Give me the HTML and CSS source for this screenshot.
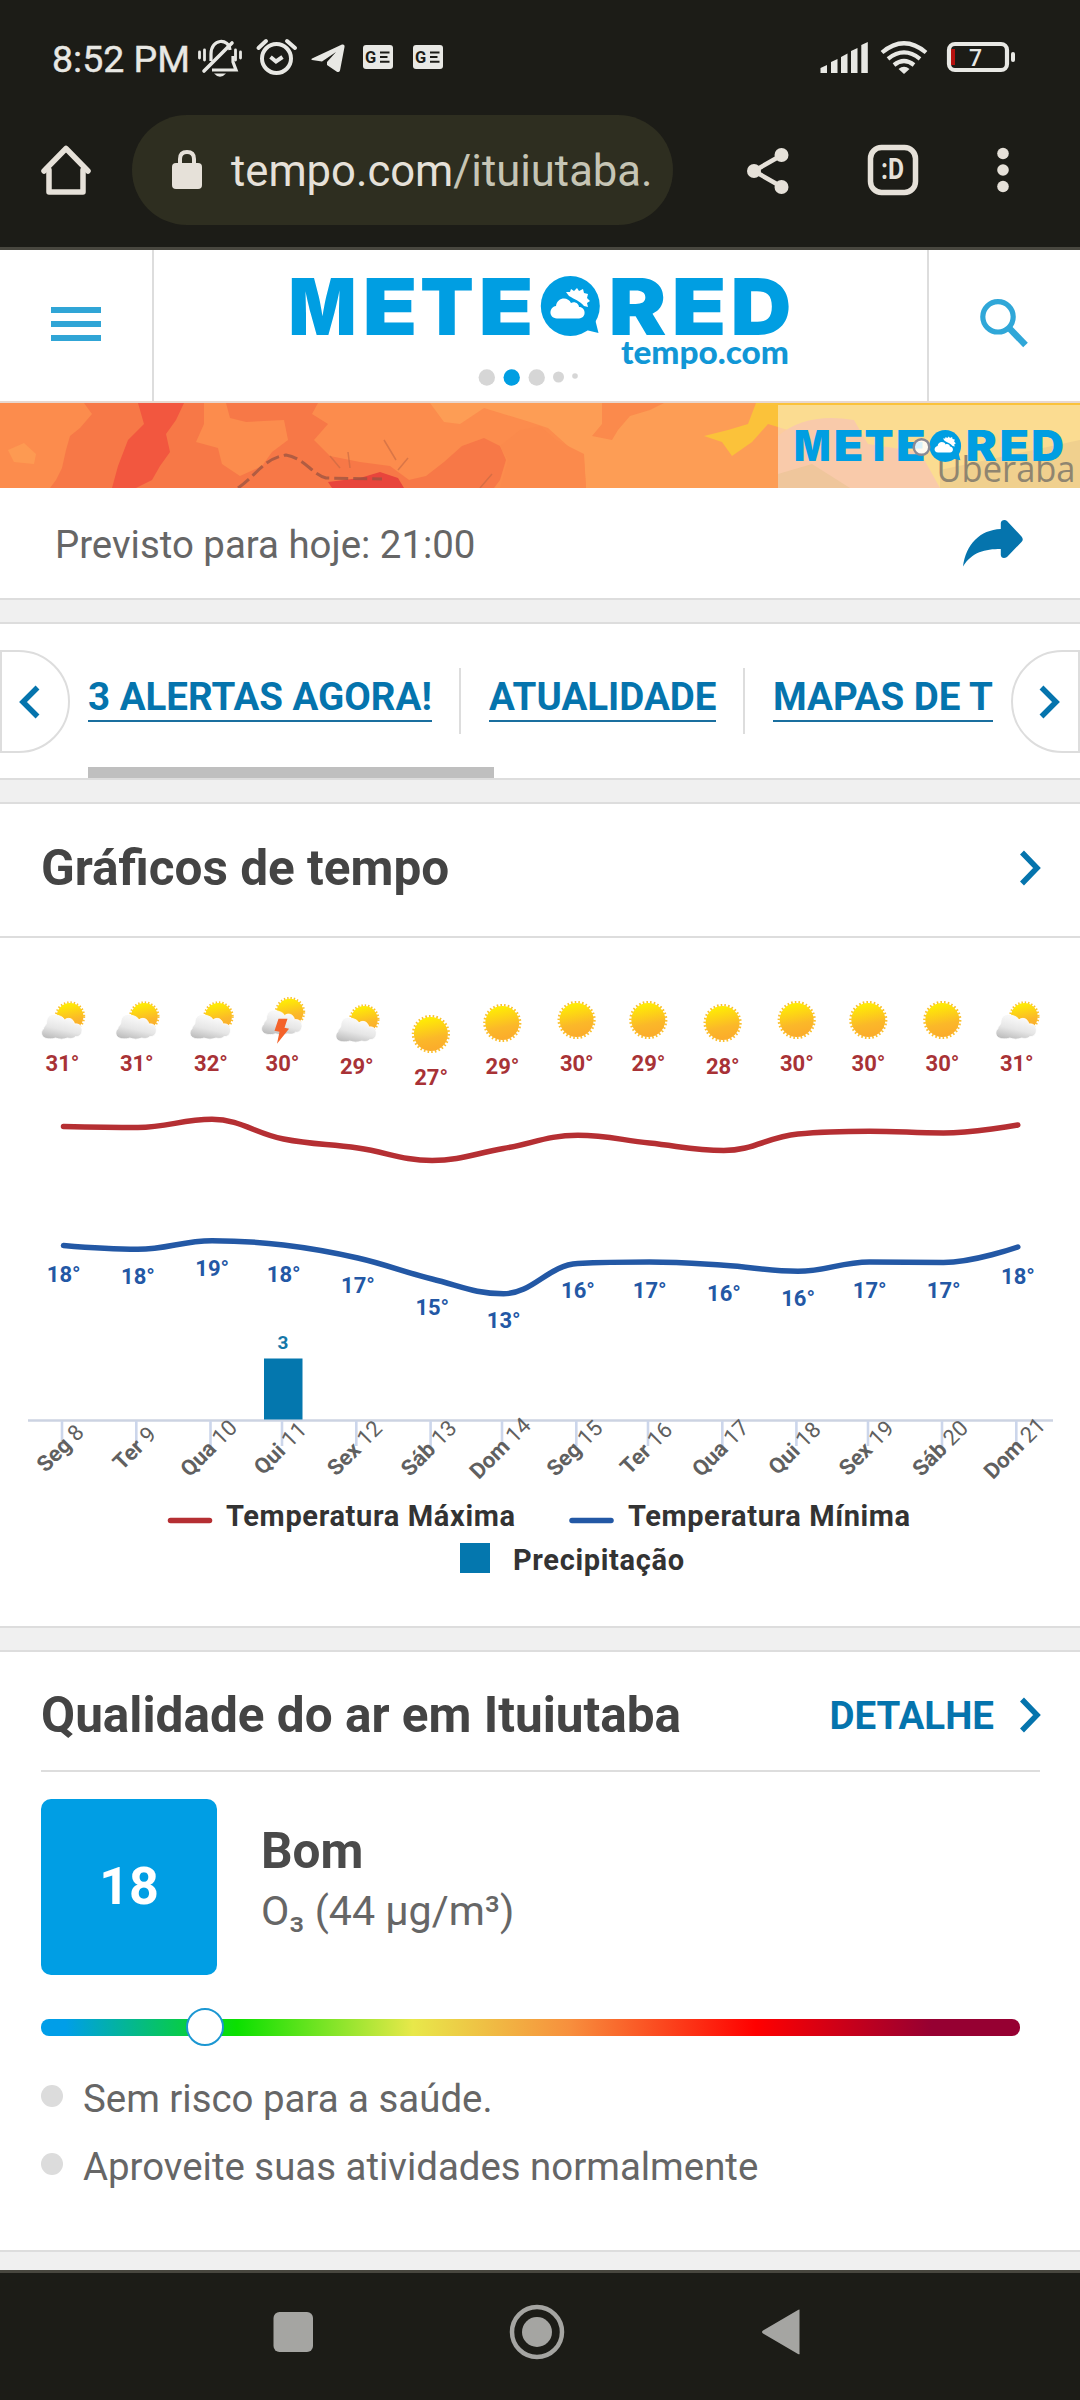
FILE: index.html
```html
<!DOCTYPE html>
<html lang="pt-BR">
<head>
    <meta charset="utf-8">
    <meta name="viewport" content="width=device-width, initial-scale=1">
    <title>Tempo em Ituiutaba</title>
    <link rel="stylesheet" href="styles.css">
</head>
<body>
    <!-- Shared symbols -->
    <svg class="symbols" width="0" height="0">
        <defs>
            <linearGradient id="sunFill" x1="0" y1="0" x2="0.2" y2="1">
                <stop offset="0.05" stop-color="#fff200"/>
                <stop offset="0.7" stop-color="#fbb829"/>
                <stop offset="1" stop-color="#fbad2b"/>
            </linearGradient>
            <linearGradient id="cloudFill" x1="0.6" y1="0.2" x2="0.3" y2="1">
                <stop offset="0" stop-color="#f7f7f7"/>
                <stop offset="0.5" stop-color="#e6e6e6"/>
                <stop offset="1" stop-color="#bdbdbd"/>
            </linearGradient>
            <g id="sun">
                <circle r="17.800" fill="none" stroke="#fbc02d" stroke-width="2.6" stroke-dasharray="1.6 2.1"/>
                <circle r="17" fill="url(#sunFill)"/>
            </g>
            <g id="cloudy">
                <circle cx="28.5" cy="15.5" r="14" fill="none" stroke="#fbc02d" stroke-width="2.4" stroke-dasharray="1.4 1.9"/>
                <circle cx="28.5" cy="15.5" r="13.4" fill="url(#sunFill)"/>
                <path fill="url(#cloudFill)" stroke="#fff" stroke-width="0.8" d="M2 28C2 25 5 24 5 22C5 15 10 12 15 14C19 15 22 16 23 19C26 16 32 17 33 23C38 22 41 26 40.500 30C40 34 37 36 34 35.500C32 38 28 37.500 26 37C22 38.500 18 38.500 14 37C10 38.500 4 38 2 36C-1 34 0 29 2 28Z"/>
            </g>
            <g id="storm">
                <use href="#cloudy"/>
                <path fill="#f4622a" d="M17 22H26L23 31L27.500 32L15.500 47L18 35L13 34Z"/>
            </g>
            <g id="wordmark">
                <g class="wordmark-text">
                    <text x="288.500" y="335" textLength="68" lengthAdjust="spacingAndGlyphs">M</text>
                    <text x="362.500" y="335" textLength="55" lengthAdjust="spacingAndGlyphs">E</text>
                    <text x="420" y="335" textLength="54" lengthAdjust="spacingAndGlyphs">T</text>
                    <text x="478.500" y="335" textLength="55" lengthAdjust="spacingAndGlyphs">E</text>
                    <text x="608.500" y="335" textLength="58" lengthAdjust="spacingAndGlyphs">R</text>
                    <text x="671.500" y="335" textLength="55" lengthAdjust="spacingAndGlyphs">E</text>
                    <text x="730.500" y="335" textLength="61" lengthAdjust="spacingAndGlyphs">D</text>
                </g>
                <ellipse cx="570.300" cy="306" rx="29.500" ry="30"/>
                <path d="M586 330L598.500 333L595 319Z"/>
                <path fill="#fff" d="M566 292L570 292L571 289L574 291L577 288L579 291L583 289L584 293L588 294L587 298L590 301L587 303L588 307L584 306C580 301 574 299 569 296Z"/>
                <path fill="#fff" d="M557 318.500C548 318 549 307 556 306C557 297 568 296 571 303C575 301 579 304 579 307C586 307 587 318 579 318.500Z"/>
            </g>
        </defs>
    </svg>

    <div class="status-bar">
        <span class="clock">8:52 PM</span>
        <svg width="58" height="44" viewBox="192 37 58 44" fill="none" stroke="#e8e8e4" stroke-width="3.2">
            <path d="M211 61V54C211 38 229 38 230 50M233 56V62L236 70H212"/>
            <path d="M204 71L232 43" stroke-width="3.600" stroke-linecap="round"/>
            <path d="M199.500 52V58M204.500 50V60M235.500 50V60M240.500 52V58" stroke-linecap="round" stroke-width="2.800"/>
            <path d="M214 73.500H226Q220 80 214 73.500Z" fill="#e8e8e4" stroke="none"/>
        </svg>
        <svg width="54" height="44" viewBox="250 37 54 44" fill="none" stroke="#e8e8e4" stroke-width="4">
            <circle cx="276.500" cy="58.500" r="14.500"/>
            <path d="M270.500 57L276 61.500L282.500 57"/>
            <path d="M258.500 48L266 41M295 48L287 41" stroke-linecap="round"/>
        </svg>
        <svg width="50" height="44" viewBox="304 37 50 44" fill="#e8e8e4">
            <path d="M312 58.500L342 44.500Q345 44 344.500 47L340 70.500Q339 73 336.500 71.500L327 65V62L336 52L322 61.500L312 60Q310.500 59 312 58.500Z"/>
        </svg>
        <svg width="50" height="44" viewBox="354 37 50 44">
            <rect x="363" y="45" width="30" height="24" rx="3" fill="#e8e8e4"/>
            <text class="news-letter" x="365" y="63">G</text>
            <path d="M380 52.500H389.500M380 57H387.500M380 61.800H389.500" stroke="#1c1c17" stroke-width="2"/>
        </svg>
        <svg width="50" height="44" viewBox="354 37 50 44">
            <rect x="363" y="45" width="30" height="24" rx="3" fill="#e8e8e4"/>
            <text class="news-letter" x="365" y="63">G</text>
            <path d="M380 52.500H389.500M380 57H387.500M380 61.800H389.500" stroke="#1c1c17" stroke-width="2"/>
        </svg>
        <svg class="status-right" width="204" height="44" viewBox="816 37 204 44">
            <g fill="#e8e8e4">
                <path d="M820.500 73V68L827 65V73ZM831 73V62L837.500 59V73ZM841 73V57L847.500 53.500V73ZM851 73V51L857.500 48V73ZM861.300 73V45L867.800 42V73Z"/>
                <path d="M898.500 69Q904 64.500 909.500 69L904 74Z"/>
                <rect x="1011" y="52" width="4" height="10" rx="2"/>
            </g>
            <g fill="none" stroke="#e8e8e4" stroke-width="4.200">
                <path d="M882 52.500Q904 34 926 52.500"/>
                <path d="M888 58.800Q904 46 920 58.800"/>
                <path d="M894 65Q904 57 914 65"/>
                <rect x="949" y="44" width="58" height="26" rx="6"/>
            </g>
            <path d="M951 49H955V65H951Z" fill="#b5120f"/>
            <text class="battery-level" x="969" y="66">7</text>
        </svg>
    </div>

    <div class="browser-bar">
        <svg width="132" height="110" viewBox="0 115 132 110" fill="none" stroke="#e6e1d9" stroke-width="5.500" stroke-linejoin="round" stroke-linecap="round">
            <path d="M49 170V192H83V170"/>
            <path d="M44 171L66 148.500L88 171" />
        </svg>
        <div class="url">
            <svg width="30" height="40" viewBox="172 150 30 40">
                <path d="M180 166V159Q180 152 187 152Q194 152 194 159V166" fill="none" stroke="#e6e1d9" stroke-width="4"/>
                <rect x="172" y="163" width="30" height="26" rx="4" fill="#e6e1d9"/>
            </svg>
            <span class="address">tempo.com<span class="path">/ituiutaba.</span></span>
        </div>
        <svg class="browser-actions" width="407" height="110" viewBox="673 115 407 110" fill="#e6e1d9">
            <path d="M782 155L754 171L782 187" fill="none" stroke="#e6e1d9" stroke-width="4.500"/>
            <circle cx="781.500" cy="155" r="7"/>
            <circle cx="754" cy="171" r="7"/>
            <circle cx="781.500" cy="187" r="7"/>
            <rect x="870.500" y="147.500" width="45" height="45" rx="11" fill="none" stroke="#e6e1d9" stroke-width="5.500"/>
            <text class="tab-count" x="881" y="179" textLength="23" lengthAdjust="spacingAndGlyphs">:D</text>
            <circle cx="1003" cy="153.500" r="5.800"/>
            <circle cx="1003" cy="170" r="5.800"/>
            <circle cx="1003" cy="186.500" r="5.800"/>
        </svg>
    </div>

    <header class="site-header">
        <div class="menu">
            <span></span>
            <span></span>
            <span></span>
        </div>
        <svg class="logo" width="773" height="151" viewBox="154 250 773 151">
            <use href="#wordmark" fill="#009ee2"/>
            <text class="logo-domain" x="621" y="363.500" textLength="168" lengthAdjust="spacingAndGlyphs">tempo.com</text>
            <g fill="#d6d6d6">
                <circle cx="486.800" cy="377.500" r="8.200"/>
                <circle cx="511.700" cy="377.500" r="8.200" fill="#009ee2"/>
                <circle cx="536.700" cy="377.500" r="8.200"/>
                <circle cx="558.500" cy="377" r="5.500"/>
                <circle cx="575" cy="376" r="2.800"/>
            </g>
        </svg>
        <svg class="search" width="151" height="151" viewBox="929 250 151 151" fill="none" stroke="#30a7d8">
            <circle cx="998" cy="316.800" r="15.200" stroke-width="5.200"/>
            <path d="M1010 329L1025.500 345" stroke-width="6.500"/>
        </svg>
    </header>

    <!-- Strip of the temperature map -->
    <svg class="map" width="1080" height="85" viewBox="0 403 1080 85">
        <rect y="403" width="1080" height="85" fill="#f77847"/>
        <path fill="#fc8c4d" d="M0 403H84L92 414L80 428L70 436L66 450L62 468L56 480L50 488H0Z"/>
        <path fill="#fd9a52" d="M8 450L24 443L36 454L34 464L14 462Z"/>
        <path fill="#f2573f" d="M138 403H184L176 420L166 434L170 452L160 466L152 480L136 488H112L118 466L128 440L144 424Z"/>
        <path fill="#fc8c4d" d="M204 403H226L230 418L246 422L284 420L288 440L272 452L262 466L240 476L222 464L218 448L196 442L204 424ZM318 403H1080V488H420L390 466L360 462L330 456L314 440L328 424L312 414Z"/>
        <path fill="#f77847" d="M400 482L426 476L444 462L462 446L484 438L500 446L506 460L500 480L494 488H396Z"/>
        <path fill="#fd9d55" d="M430 403H1080V488H586L584 460L568 446L548 428L530 422L484 408L460 424L444 422Z"/>
        <path fill="#fb8a4c" d="M602 403H664L650 410L630 416L618 430L612 440L592 436L602 424ZM540 426L556 440L568 446L584 454L586 488H500L508 460L500 446L520 430Z"/>
        <path fill="#fbc23a" d="M756 403H1080V488H800L788 430L768 424L752 442L732 456L722 442L704 436L728 430L748 424Z"/>
        <path fill="#e8453c" d="M328 482L360 478L380 472L398 478L404 488H332Z"/>
        <path fill="none" stroke="#9a5340" stroke-width="3" stroke-dasharray="14 5" opacity="0.75" d="M238 488C256 476 264 458 286 455C304 458 312 474 326 478L382 479"/>
        <path fill="none" stroke="#c36742" stroke-width="1.500" opacity="0.6" d="M330 456L340 468M348 452L350 468M384 440L396 460M408 458L398 470M480 488L492 474"/>
        <path fill="#f69a72" d="M778 436Q806 412 854 420L868 444L920 452L940 488H778Z"/>
        <rect x="778" y="405" width="302" height="83" fill="#fbf2d8" opacity="0.55"/>
        <path fill="#e3c08c" opacity="0.45" d="M778 474L812 464L850 488H778ZM940 470L1080 440V488H940Z"/>
        <text class="map-city" x="936.500" y="482" textLength="139" lengthAdjust="spacingAndGlyphs">Uberaba</text>
        <use href="#wordmark" fill="#009ee2" transform="translate(639 283.500) scale(0.537 0.531)"/>
        <circle cx="921.500" cy="447" r="7.800" fill="#fff" fill-opacity="0.850" stroke="#8a8a94" stroke-width="2.500"/>
    </svg>

    <div class="forecast-time">
        <span class="forecast-label">Previsto para hoje: 21:00</span>
        <svg width="62" height="48" viewBox="962 520 62 48">
            <path fill="#0574ad" d="M963 567.500C966 545 980 531 1000.800 530V524C1001 521 1005 520 1007 522L1021.500 537.500Q1024 540.500 1021.500 543L1007 558C1004 560 1001 559 1000.800 556V550C985 550 972 553 963 567.500Z"/>
        </svg>
    </div>

    <nav class="tabs">
        <div class="tab-arrow tab-prev">
            <svg width="24" height="36" viewBox="0 0 24 36"><path class="chevron" d="M19.500 3.500L5 18L19.500 32.500"/></svg>
        </div>
        <div class="tab-list">
            <a class="tab tab-alerts">3 ALERTAS AGORA!</a>
            <a class="tab tab-news">ATUALIDADE</a>
            <a class="tab tab-maps">MAPAS DE T</a>
            <div class="tab-scroll"></div>
        </div>
        <div class="tab-arrow tab-next">
            <svg width="24" height="36" viewBox="0 0 24 36"><path class="chevron" d="M4.500 3.500L19 18L4.500 32.500"/></svg>
        </div>
    </nav>

    <section class="card chart-card">
        <div class="card-title">
            <h2 id="chartTitle">Gráficos de tempo</h2>
            <svg width="24" height="36" viewBox="0 0 24 36"><path class="chevron" d="M5 2.500L20 18L5 33.500"/></svg>
        </div>
        <svg class="chart" id="chart" width="1080" height="688" viewBox="0 938 1080 688">
            <path d="M28 1420.500H1053" stroke="#ccd3e2" stroke-width="2.600"/>
            <rect x="264" y="1358.500" width="38.500" height="61" fill="#0477ae"/>
            <text class="rain-label" x="283" y="1349">3</text>
            <path d="M170.500 1520.500H209.500" stroke="#b52f33" stroke-width="5.500" stroke-linecap="round"/>
            <text class="legend" x="226" y="1526" textLength="289">Temperatura Máxima</text>
            <path d="M572 1520.500H611" stroke="#2358a5" stroke-width="5.500" stroke-linecap="round"/>
            <text class="legend" x="628" y="1526" textLength="282">Temperatura Mínima</text>
            <rect x="460" y="1543" width="30" height="30" fill="#0477ae"/>
            <text class="legend" x="513" y="1570" textLength="171">Precipitação</text>
        </svg>
    </section>

    <section class="card air-card">
        <div class="card-title air-title">
            <h2>Qualidade do ar em Ituiutaba</h2>
            <a class="detail">DETALHE</a>
            <svg width="24" height="36" viewBox="0 0 24 36"><path class="chevron" d="M5 2.500L20 18L5 33.500"/></svg>
        </div>
        <div class="air-summary">
            <div class="air-index">18</div>
            <div class="air-text">
                <strong>Bom</strong>
                <span>O₃ (44 µg/m³)</span>
            </div>
        </div>
        <div class="air-scale">
            <div class="air-marker"></div>
        </div>
        <ul class="air-tips">
            <li>Sem risco para a saúde.</li>
            <li>Aproveite suas atividades normalmente</li>
        </ul>
    </section>

    <div class="nav-bar">
        <svg width="60" height="60" viewBox="0 0 60 60"><rect x="10.500" y="10" width="39.500" height="40" rx="6"/></svg>
        <svg width="60" height="60" viewBox="0 0 60 60">
            <circle cx="30" cy="30" r="25" fill="none" stroke="#a5a5a2" stroke-width="4.500"/>
            <circle cx="30" cy="30" r="15"/>
        </svg>
        <svg width="60" height="60" viewBox="0 0 60 60"><path d="M48.500 8.500Q49 7 47 8L12 28.500Q10 30 12 31.500L47 52Q49 53 48.500 51Z"/></svg>
    </div>

    <script src="chart.js"></script>
</body>
</html>
```

FILE: styles.css
```css
* {
    box-sizing: border-box;
}

body {
    margin: 0;
    width: 1080px;
    height: 2400px;
    overflow: hidden;
    background-color: #fff;
    font-family: Roboto, "Liberation Sans", sans-serif;
    color: #666;
}

svg {
    display: block;
    flex-shrink: 0;
}

.symbols {
    position: absolute;
}

/* Phone status bar */
.status-bar {
    display: flex;
    align-items: center;
    height: 115px;
    padding: 3px 60px 0 52px;
    background-color: #1c1c17;
}

.clock {
    width: 140px;
    font-size: 37.5px;
    white-space: nowrap;
    color: #e8e8e4;
    -webkit-text-stroke: 0.4px #e8e8e4;
}

.status-right {
    margin-left: auto;
}

.news-letter {
    font: 700 16.5px Roboto, sans-serif;
    fill: #1c1c17;
}

.battery-level {
    font: 500 23px Roboto, sans-serif;
    fill: #e8e8e4;
}

/* Browser toolbar */
.browser-bar {
    display: flex;
    height: 135px;
    padding-bottom: 22px;
    border-bottom: 3px solid #48473f;
    background-color: #1c1c17;
}

.url {
    display: flex;
    align-items: center;
    width: 541px;
    height: 110px;
    padding-left: 40px;
    border-radius: 55px;
    background-color: #2e2e20;
}

.address {
    margin-left: 29px;
    padding-top: 2px;
    font-size: 43.6px;
    white-space: nowrap;
    color: #e6e1d9;
}

.path {
    color: #c6c5b5;
}

.tab-count {
    font: 700 29px Roboto, sans-serif;
}

/* Site header */
.site-header {
    display: flex;
    height: 153px;
    border-bottom: 2px solid #e8d8d0;
}

.menu {
    display: flex;
    flex-direction: column;
    gap: 8px;
    width: 154px;
    padding: 57px 0 0 51px;
    border-right: 2px solid #ddd;
}

.menu span {
    width: 50px;
    height: 6px;
    background-color: #30a5d6;
}

.search {
    box-sizing: content-box;
    border-left: 2px solid #ddd;
}

.wordmark-text {
    font: 900 79px Inter, "Liberation Sans", sans-serif;
}

.logo-domain {
    font: 900 32px Lato, "Open Sans", sans-serif;
    fill: #1197d6;
}

.map-city {
    font: 400 36px "Open Sans", sans-serif;
    fill: #8f8570;
}

.forecast-time {
    display: flex;
    align-items: center;
    justify-content: space-between;
    height: 112px;
    padding: 2px 56px 2px 55px;
    border-bottom: 2px solid #ddd;
    font-size: 38.4px;
}

.forecast-label {
    padding-top: 3px;
}

/* Section tabs */
.tabs {
    display: flex;
    align-items: flex-start;
    height: 180px;
    padding-top: 28px;
    border-top: 22px solid #f0f0f0;
    border-bottom: 2px solid #ddd;
    box-shadow: inset 0 2px 0 #ddd;
}

.tab-arrow {
    display: flex;
    align-items: center;
    width: 70px;
    height: 103px;
    border: 2px solid #ddd;
}

.tab-prev {
    padding-left: 16px;
    border-radius: 0 52px 52px 0;
}

.tab-next {
    width: 69px;
    padding-left: 24px;
    border-radius: 52px 0 0 52px;
}

.chevron {
    fill: none;
    stroke: #0574ad;
    stroke-width: 5.5;
}

.tab-list {
    display: flex;
    flex-wrap: wrap;
    flex-shrink: 0;
    width: 905px;
    margin: 18px 18px 0 18px;
}

.tab {
    position: relative;
    height: 54px;
    padding-top: 6px;
    border-bottom: 2px solid #1a6f9f;
    font-size: 38.5px;
    font-weight: 700;
    line-height: 46px;
    white-space: nowrap;
    color: #0574ad;
}

.tab-alerts {
    width: 344px;
    margin-right: 57px;
}

.tab-news {
    width: 227px;
    margin-right: 57px;
}

.tab-maps {
    width: 220px;
}

.tab-alerts::after,
.tab-news::after {
    content: "";
    position: absolute;
    top: 0;
    right: -29px;
    width: 2px;
    height: 66px;
    background-color: #ddd;
}

.tab-scroll {
    width: 406px;
    height: 11px;
    margin-top: 45px;
    background-color: #bfbfbf;
}

/* Cards */
.card {
    border-top: 22px solid #f0f0f0;
    border-bottom: 2px solid #ddd;
    box-shadow: inset 0 2px 0 #ddd;
}

.card-title {
    display: flex;
    align-items: center;
    padding: 0 39px 0 41px;
}

.card-title h2 {
    margin: 0 auto 0 0;
    font-size: 49.5px;
    font-weight: 700;
    color: #444;
}

.chart-card .card-title {
    height: 136px;
    padding-bottom: 2px;
    border-bottom: 2px solid #ddd;
}

.max-label,
.min-label,
.rain-label {
    font-size: 22px;
    font-weight: 700;
    text-anchor: middle;
}

.max-label {
    fill: #a83236;
}

.min-label {
    fill: #2358a5;
}

.rain-label {
    font-size: 19px;
    fill: #1477a8;
}

.day-label {
    font-size: 22px;
    text-anchor: middle;
    fill: #606060;
}

.day-name {
    font-weight: 700;
}

.legend {
    font-size: 29px;
    font-weight: 700;
    fill: #333;
}

.chart-line {
    fill: none;
    stroke-width: 5.5;
    stroke-linecap: round;
    stroke-linejoin: round;
}

/* Air quality */
.air-card {
    height: 624px;
}

.air-title {
    height: 122px;
    margin: 0 40px 0 41px;
    padding: 10px 0 0 0;
    border-bottom: 2px solid #ddd;
}

.air-title svg {
    margin-right: -1px;
}

.detail {
    margin-right: 23px;
    font-size: 38.5px;
    font-weight: 700;
    color: #0574ad;
}

.air-summary {
    display: flex;
    align-items: center;
    margin: 27px 0 0 41px;
}

.air-index {
    width: 176px;
    height: 176px;
    border-radius: 10px;
    background-color: #009ee4;
    font-size: 52px;
    font-weight: 700;
    line-height: 176px;
    text-align: center;
    color: #fff;
}

.air-text {
    display: flex;
    flex-direction: column;
    margin: -13px 0 0 44px;
    font-size: 41.2px;
    line-height: 60px;
}

.air-text strong {
    font-size: 49.5px;
    font-weight: 700;
    color: #4a4a4a;
}

.air-scale {
    width: 979px;
    height: 17px;
    margin: 44px 0 0 41px;
    border-radius: 8px;
    background: linear-gradient(to right, #009ee8 2.500%, #0be000 20%, #e8e84a 38%, #f78f3d 54%, #ff0000 73%, #960032 91%);
}

.air-marker {
    position: relative;
    top: -11px;
    left: 145px;
    width: 38px;
    height: 38px;
    border: 2px solid #1b97d2;
    border-radius: 50%;
    background-color: #fff;
}

.air-tips {
    margin: 28.500px 0 0 41px;
    padding: 0;
    list-style: none;
    font-size: 38.4px;
    line-height: 68px;
}

.air-tips li {
    display: flex;
    align-items: center;
}

.air-tips li::before {
    content: "";
    width: 22px;
    height: 22px;
    margin: -6px 20px 0 0;
    border-radius: 50%;
    background-color: #dcdcdc;
}

/* Phone navigation bar */
.nav-bar {
    display: flex;
    justify-content: center;
    gap: 184px;
    height: 148px;
    padding: 32px 7px 0 0;
    border-top: 18px solid #f0f0f0;
    background-color: #1c1c17;
    box-shadow: inset 0 3px 0 #48473f;
    fill: #a5a5a2;
}
```

FILE: chart.js
```javascript
const SVG = "http://www.w3.org/2000/svg";
const chart = document.getElementById("chart");

// x, day, max temp, max line y, max label y, min temp, min line y, min label y, icon
const days = [
    [62, "Seg", 8, 31, 1126.5, 1070.7, 18, 1245.5, 1282, "cloudy"],
    [136.3, "Ter", 9, 31, 1127.5, 1070.7, 18, 1249.3, 1283.5, "cloudy"],
    [210.5, "Qua", 10, 32, 1119.3, 1070.7, 19, 1240.7, 1275.7, "cloudy"],
    [282, "Qui", 11, 30, 1139, 1070.7, 18, 1245, 1282, "storm"],
    [356.3, "Sex", 12, 29, 1148, 1073.7, 17, 1258, 1293, "cloudy"],
    [430.6, "Sáb", 13, 27, 1160.5, 1084.7, 15, 1279, 1315, "sun"],
    [502, "Dom", 14, 29, 1148.5, 1073.7, 13, 1293.7, 1328, "sun"],
    [576.3, "Seg", 15, 30, 1135.3, 1070.7, 16, 1263.5, 1297.7, "sun"],
    [648, "Ter", 16, 29, 1143, 1070.7, 17, 1262, 1297.7, "sun"],
    [722.3, "Qua", 17, 28, 1150.5, 1073.7, 16, 1265.3, 1301, "sun"],
    [796.4, "Qui", 18, 30, 1134, 1070.7, 16, 1271.3, 1306, "sun"],
    [868, "Sex", 19, 30, 1131.2, 1070.7, 17, 1262, 1297.7, "sun"],
    [942, "Sáb", 20, 30, 1133, 1070.7, 17, 1262.5, 1297.7, "sun"],
    [1016.3, "Dom", 21, 31, 1125, 1070.7, 18, 1247, 1284, "cloudy"]
];

function add(tag, attrs, text) {
    let el = document.createElementNS(SVG, tag);
    for (let key in attrs) {
        el.setAttribute(key, attrs[key]);
    }
    if (text !== undefined) {
        el.textContent = text;
    }
    chart.appendChild(el);
    return el;
}

// Smooth curve through all the points, without overshooting at peaks
function spline(points) {
    let path = "M" + points[0];
    let control = points[0];
    for (let i = 1; i < points.length; i++) {
        let [x, y] = points[i];
        let left = [x, y];
        let right = [x, y];
        if (i < points.length - 1) {
            let [px, py] = points[i - 1];
            let [nx, ny] = points[i + 1];
            left = [(1.5 * x + px) / 2.5, (1.5 * y + py) / 2.5];
            right = [(1.5 * x + nx) / 2.5, (1.5 * y + ny) / 2.5];
            let fix = (right[1] - left[1]) * (right[0] - x) / (right[0] - left[0]) + y - right[1];
            left[1] += fix;
            right[1] += fix;
            let low = Math.min(py, y), high = Math.max(py, y);
            if (left[1] > high || left[1] < low) {
                left[1] = left[1] > high ? high : low;
                right[1] = 2 * y - left[1];
            }
            low = Math.min(ny, y);
            high = Math.max(ny, y);
            if (right[1] > high || right[1] < low) {
                right[1] = right[1] > high ? high : low;
                left[1] = 2 * y - right[1];
            }
        }
        path += " C" + [control, left, [x, y]].join(" ");
        control = right;
    }
    return path;
}

for (let [x, name, number, max, maxY, maxLabelY, min, minY, minLabelY, icon] of days) {
    add("path", { d: "M" + x + " 1421V1446", stroke: "#ccd6eb", "stroke-width": 2.6 });

    let label = add("text", { class: "day-label", transform: "translate(" + (x + 3.5) + " 1453.5) rotate(-45)" });
    label.innerHTML = '<tspan class="day-name">' + name + "</tspan> " + number;

    add("text", { class: "max-label", x: x + 0.5, y: maxLabelY }, max + "°");
    add("text", { class: "min-label", x: x + 1.7, y: minLabelY }, min + "°");

    let iconX = icon === "sun" ? x + 0.3 : x - 20.5;
    let iconY = maxLabelY - (icon === "sun" ? 50.7 : icon === "storm" ? 74 : 69.7);
    add("use", { href: "#" + icon, x: iconX, y: iconY });
}

add("path", { class: "chart-line", stroke: "#b52f33", d: spline(days.map(d => [d[0] + 1.5, d[4]])) });
add("path", { class: "chart-line", stroke: "#2358a5", d: spline(days.map(d => [d[0] + 1.5, d[7]])) });
```
